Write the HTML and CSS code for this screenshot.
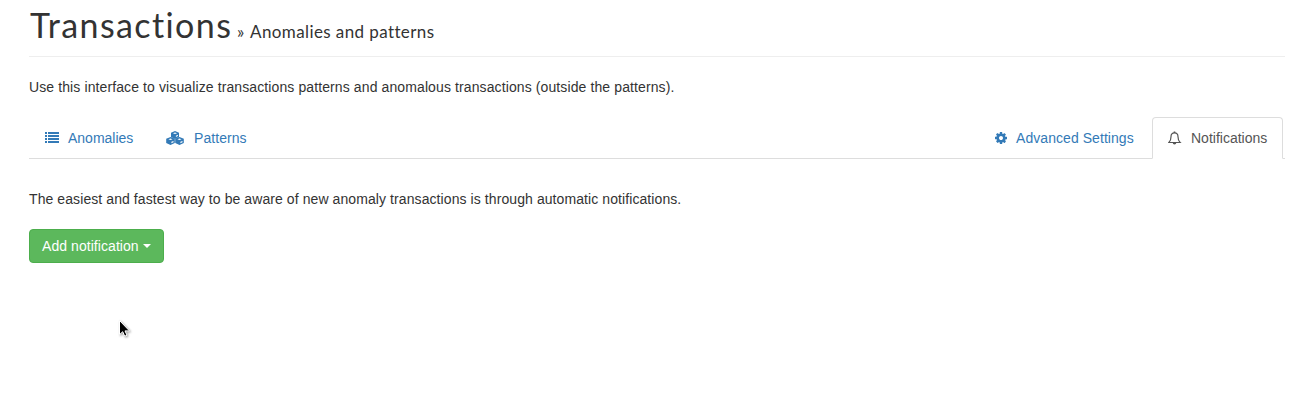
FILE: index.html
```
<!DOCTYPE html>
<html lang="en">
<head>
<meta charset="utf-8">
<title>Transactions</title>
<link rel="stylesheet" href="styles.css">
</head>
<body>
<main class="page">
  <header class="page-header"><h1><span class="title">Transactions</span><small class="sub"><span class="raquo">»</span><span class="subtitle">Anomalies and patterns</span></small></h1></header>
  <p class="intro"><span class="intro-text">Use this interface to visualize transactions patterns and anomalous transactions (outside the patterns).</span></p>
  <nav class="tabs">
    <a class="tab tab-anomalies"><svg class="icon" width="14" height="12" viewBox="0 0 14 12"><path fill="currentColor" d="M0 0h2v2H0zM3 0h11v2H3zM0 3h2v2H0zM3 3h11v2H3zM0 6h2v2H0zM3 6h11v2H3zM0 9h2v2H0zM3 9h11v2H3z"/></svg><span class="label">Anomalies</span></a>
    <a class="tab tab-patterns"><svg class="icon cubes" width="18" height="14" viewBox="0 0 18 14"><path fill="currentColor" d="M9 0l4 1.700v4.300L9 7.800 5 6V1.700zM4.500 6l4.300 1.700v4.300l-4.300 2L.2 12V7.700zM13.500 6l4.300 1.700v4.300l-4.300 2-4.300-2V7.700z"/><path fill="#fff" d="M6.900 2.200L9 1.400l2.100.8L9 3.100zM9.900 6V4.700l2-.9v1.300zM2.400 8.200l2.100-.8 2.100.8-2.100.9zM5.400 12.200v-1.400l2.100-.9v1.400zM11.400 8.200l2.100-.8 2.100.8-2.100.9zM14.400 12.200v-1.400l2.100-.9v1.400z"/></svg><span class="label">Patterns</span></a>
    <a class="tab tab-settings"><svg class="icon" width="12" height="12" viewBox="0 -128 1536 1536"><path fill="currentColor" fill-rule="evenodd" d="M1024 640q0 106-75 181t-181 75-181-75-75-181 75-181 181-75 181 75 75 181zm512-109v222q0 12-8 23t-20 13l-185 28q-19 54-39 91 35 50 107 138 10 12 10 25t-9 23q-27 37-99 108t-94 71q-12 0-26-9l-138-108q-44 23-91 38-16 136-29 186-7 28-36 28h-222q-14 0-24.500-8.500t-11.500-21.500l-28-184q-49-16-90-37l-141 107q-10 9-25 9-14 0-25-11-126-114-165-168-7-10-7-23 0-12 8-23 15-21 51-66.500t54-70.500q-27-50-41-99l-183-27q-13-2-21-12.500t-8-23.500v-222q0-12 8-23t19-13l186-28q14-46 39-92-40-57-107-138-10-12-10-24 0-10 9-23 26-36 98.500-107.500t94.500-71.500q13 0 26 10l138 107q44-23 91-38 16-136 29-186 7-28 36-28h222q14 0 24.500 8.500t11.500 21.500l28 184q49 16 90 37l142-107q9-9 24-9 13 0 25 10 129 119 165 170 7 8 7 22 0 12-8 23-15 21-51 66.500t-54 70.500q26 50 41 98l183 28q13 2 21 12.500t8 23.500z"/></svg><span class="label">Advanced Settings</span></a>
    <a class="tab tab-notifications active"><svg class="icon" width="14" height="14" viewBox="0 0 14 14"><path fill="none" stroke="currentColor" stroke-width="1.200" d="M.9 11.500h11.200C10.500 10 10 8.200 10 5.800 10 3.500 8.800 1.900 6.500 1.900S3 3.500 3 5.800C3 8.200 2.500 10 .9 11.500z"/><path fill="currentColor" d="M5.700.4h1.600v1.700H5.700zM4.700 11.500h3.600c0 1.200-.8 2-1.800 2s-1.800-.8-1.800-2z"/></svg><span class="label">Notifications</span></a>
  </nav>
  <p class="lead"><span class="lead-text">The easiest and fastest way to be aware of new anomaly transactions is through automatic notifications.</span></p>
  <button class="btn"><span class="btn-label">Add notification</span><span class="caret"></span></button>
  <svg class="cursor" width="13" height="19" viewBox="0 0 13 19"><path fill="#000" stroke="#fff" d="M1.500 1.500v14.200l3.200-3 2 4.500 2.300-1-2-4.300h4.500z"/></svg>
</main>
</body>
</html>
```
FILE: styles.css
```
* { box-sizing: border-box; }
body { margin: 0; background: #fff; color: #333; font: 14px/20px "Liberation Sans", Arial, sans-serif; }
.page { height: 400px; padding: 0 15px 0 29px; overflow: hidden; }
.page-header { height: 57px; border-bottom: 1px solid #eee; }
h1 { display: flex; align-items: baseline; margin: 0; padding: 5px 0 0 1px; font: 400 34px/40px Lato, sans-serif; white-space: nowrap; }
.title { width: 207px; letter-spacing: 1.4px; }
.sub { display: flex; font-size: 17px; line-height: 20px; }
.raquo { width: 13px; }
.subtitle { letter-spacing: .4px; }
p { margin: 0; white-space: nowrap; }
.intro { padding-top: 20px; height: 60px; }
.intro-text { letter-spacing: .108px; }
.tabs { display: flex; height: 42px; border-bottom: 1px solid #ddd; }
.tab { display: flex; align-items: center; height: 42px; border: 1px solid transparent; border-radius: 4px 4px 0 0; color: #337ab7; padding-left: 15px; white-space: nowrap; }
.icon { flex: none; margin-right: 9px; }
.cubes { margin-left: -1px; margin-right: 10px; }
.tab-anomalies { width: 122px; }
.tab-patterns .label, .tab-settings .label { letter-spacing: .06px; }
.tab-settings { margin-left: auto; width: 173px; }
.tab-notifications { width: 131px; margin-right: 2px; }
.active { color: #555; background: #fff; border-color: #ddd #ddd #fff; }
.lead { padding-top: 30px; height: 70px; }
.lead-text { letter-spacing: .085px; }
.btn { display: flex; align-items: center; width: 135px; height: 34px; padding: 0 12px; border: 1px solid #4cae4c; border-radius: 4px; background: #5cb85c; color: #fff; font: inherit; letter-spacing: .06px; white-space: nowrap; }
.caret { margin-left: 4px; border-top: 4px solid; border-left: 4px solid transparent; border-right: 4px solid transparent; }
.cursor { display: block; margin: 56px 0 0 89px; filter: drop-shadow(1px 1px 1px rgba(0,0,0,.4)); }
```
